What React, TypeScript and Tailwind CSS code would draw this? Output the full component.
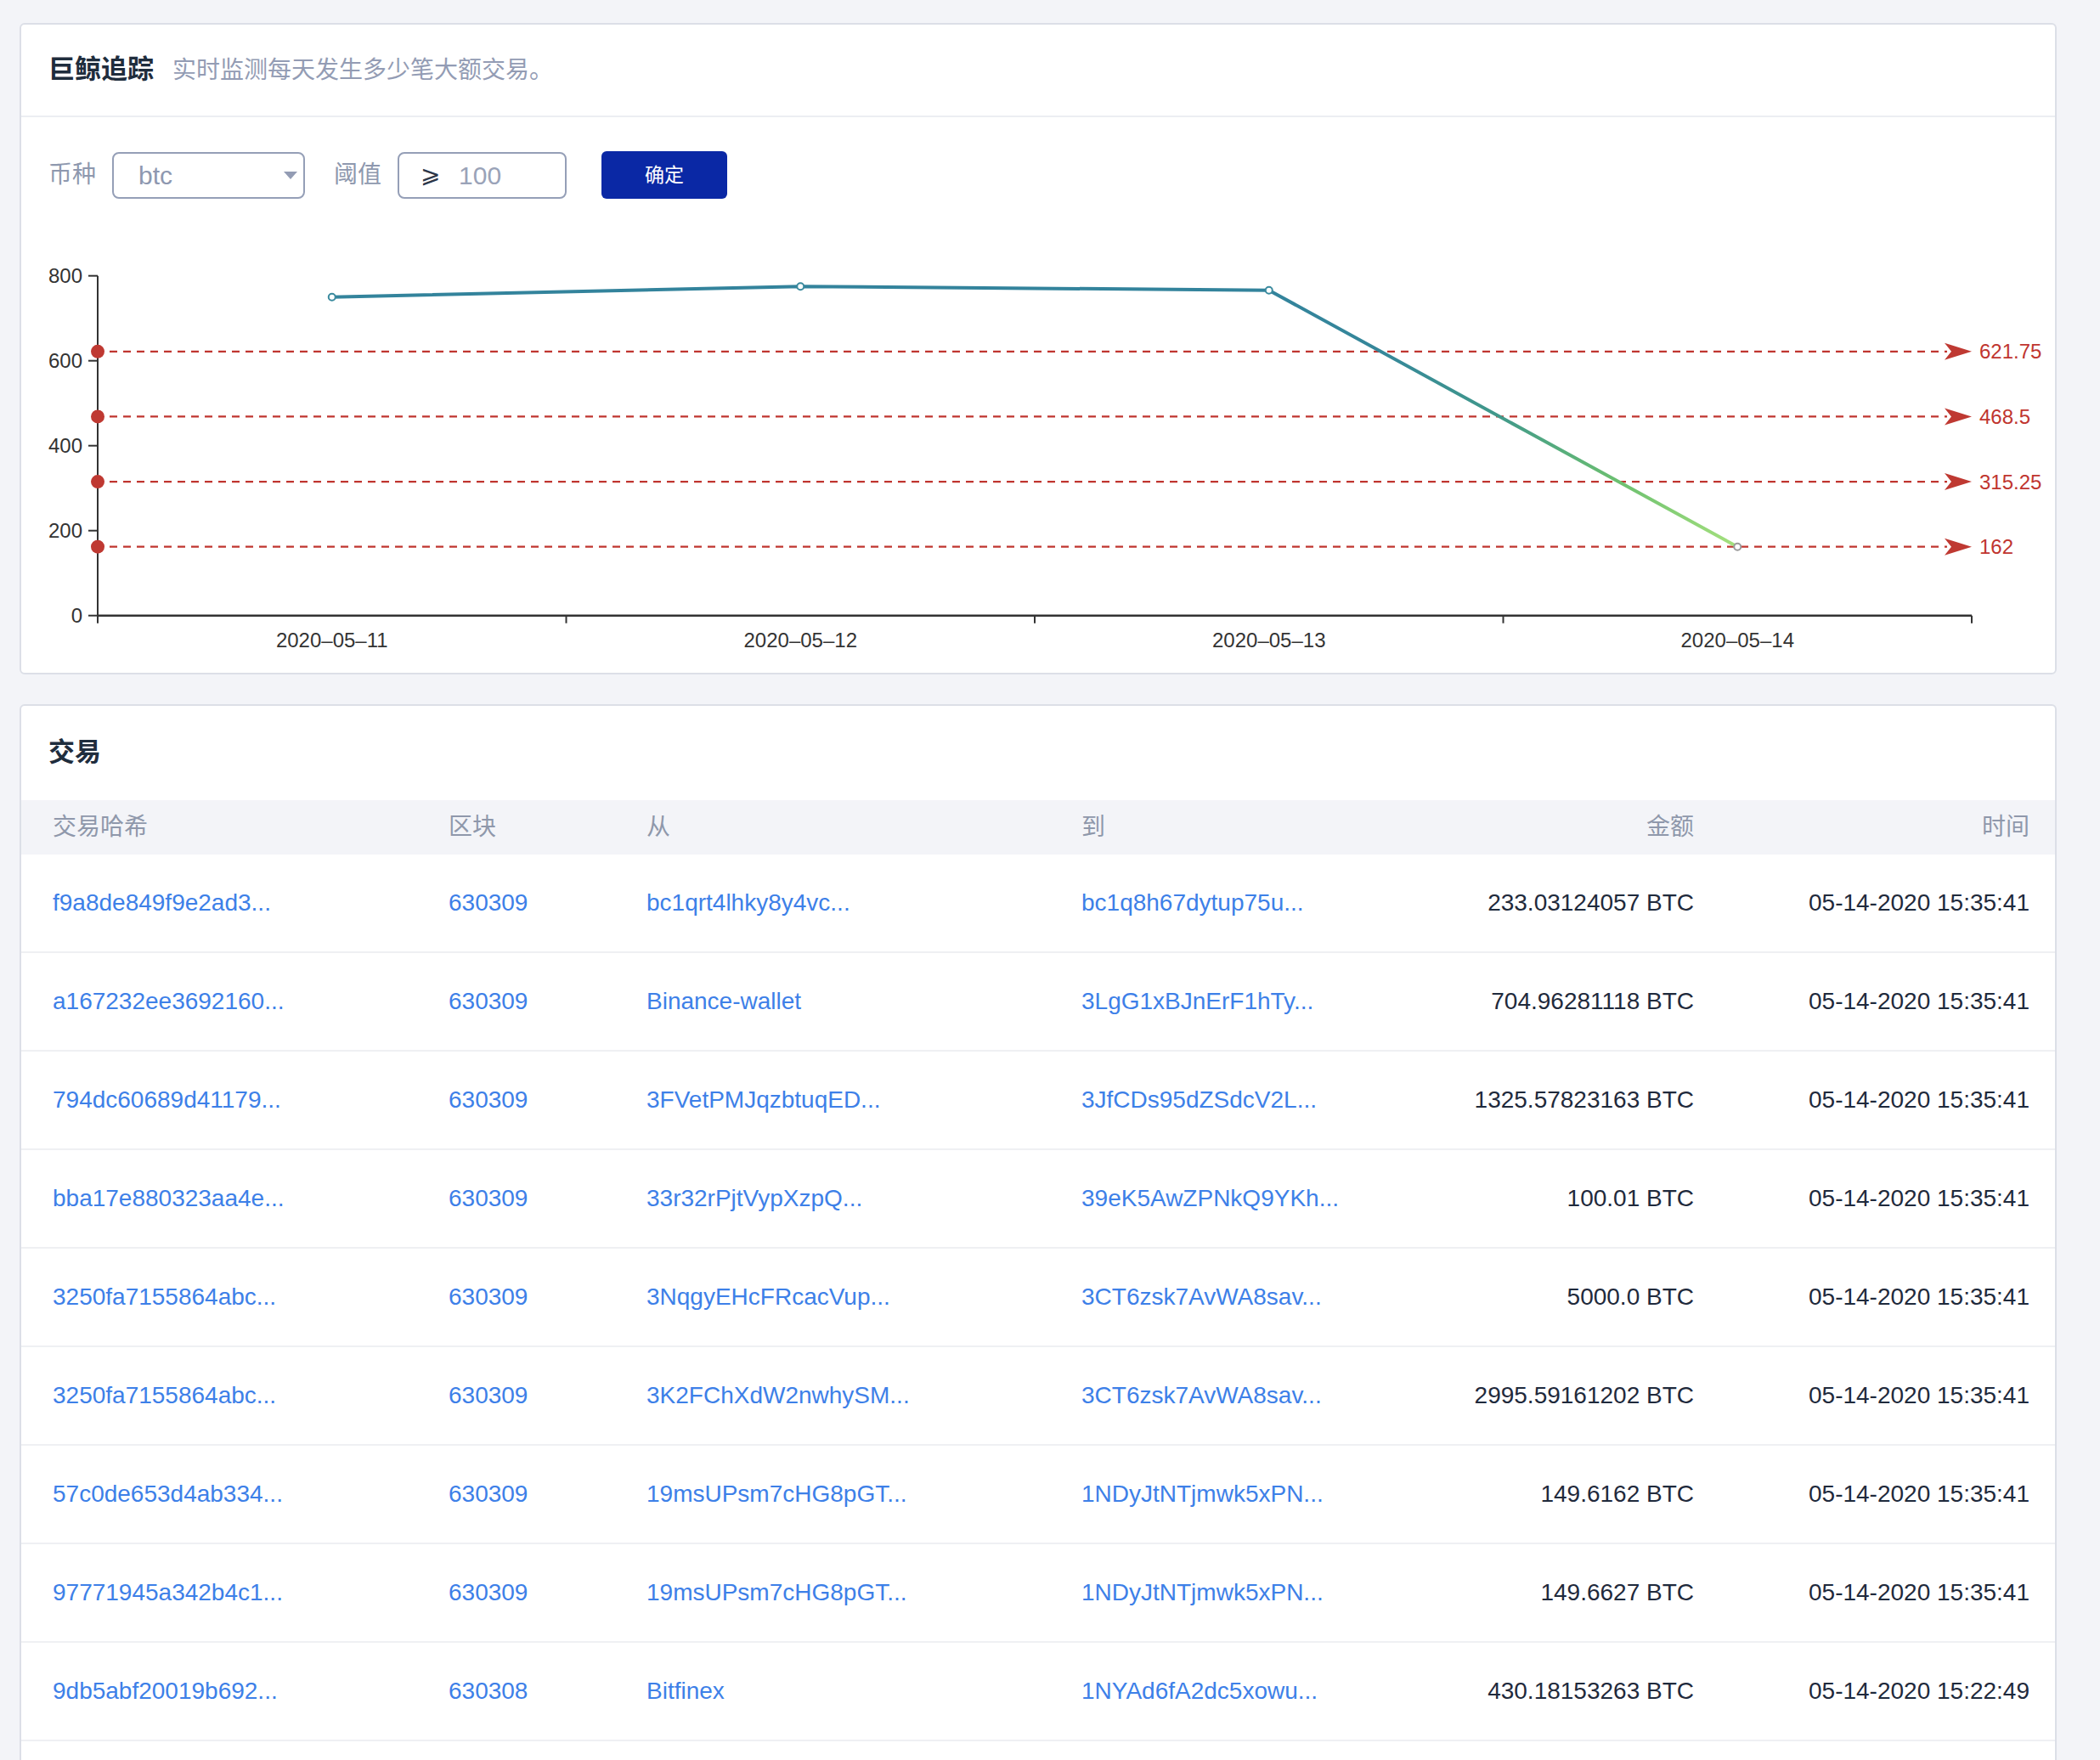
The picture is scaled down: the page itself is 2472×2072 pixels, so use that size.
import React from 'react';

const FONT = '"Liberation Sans", "Noto Sans CJK SC", sans-serif';

const rows = [
  { hash: 'f9a8de849f9e2ad3...', block: '630309', from: 'bc1qrt4lhky8y4vc...', to: 'bc1q8h67dytup75u...', amount: '233.03124057 BTC', time: '05-14-2020 15:35:41' },
  { hash: 'a167232ee3692160...', block: '630309', from: 'Binance-wallet', to: '3LgG1xBJnErF1hTy...', amount: '704.96281118 BTC', time: '05-14-2020 15:35:41' },
  { hash: '794dc60689d41179...', block: '630309', from: '3FVetPMJqzbtuqED...', to: '3JfCDs95dZSdcV2L...', amount: '1325.57823163 BTC', time: '05-14-2020 15:35:41' },
  { hash: 'bba17e880323aa4e...', block: '630309', from: '33r32rPjtVypXzpQ...', to: '39eK5AwZPNkQ9YKh...', amount: '100.01 BTC', time: '05-14-2020 15:35:41' },
  { hash: '3250fa7155864abc...', block: '630309', from: '3NqgyEHcFRcacVup...', to: '3CT6zsk7AvWA8sav...', amount: '5000.0 BTC', time: '05-14-2020 15:35:41' },
  { hash: '3250fa7155864abc...', block: '630309', from: '3K2FChXdW2nwhySM...', to: '3CT6zsk7AvWA8sav...', amount: '2995.59161202 BTC', time: '05-14-2020 15:35:41' },
  { hash: '57c0de653d4ab334...', block: '630309', from: '19msUPsm7cHG8pGT...', to: '1NDyJtNTjmwk5xPN...', amount: '149.6162 BTC', time: '05-14-2020 15:35:41' },
  { hash: '97771945a342b4c1...', block: '630309', from: '19msUPsm7cHG8pGT...', to: '1NDyJtNTjmwk5xPN...', amount: '149.6627 BTC', time: '05-14-2020 15:35:41' },
  { hash: '9db5abf20019b692...', block: '630308', from: 'Bitfinex', to: '1NYAd6fA2dc5xowu...', amount: '430.18153263 BTC', time: '05-14-2020 15:22:49' },
];

// chart geometry, in page pixels
const X0 = 115;
const X1 = 2321;
const Y0 = 726.7; // value 0
const yOf = (v: number) => Y0 - v * 0.5;
const days = ['2020–05–11', '2020–05–12', '2020–05–13', '2020–05–14'];
const values = [750, 775, 766, 162];
const step = (X1 - X0) / 4;
const xOf = (i: number) => X0 + step * i + step / 2;
const marks = [621.75, 468.5, 315.25, 162];

const Chart = () => {
  const pts = values.map((v, i) => `${xOf(i)},${yOf(v)}`).join(' ');
  return (
    <svg width={2394} height={558} viewBox="25 236 2394 558" className="block">
      <defs>
        <linearGradient id="lineGrad" gradientUnits="userSpaceOnUse" x1="0" y1="339" x2="0" y2="646">
          <stop offset="0" stopColor="#33839c" />
          <stop offset="0.25" stopColor="#35879a" />
          <stop offset="0.5" stopColor="#41998a" />
          <stop offset="0.75" stopColor="#6cc070" />
          <stop offset="1" stopColor="#a6e17e" />
        </linearGradient>
      </defs>

      {/* y axis */}
      <line x1={X0} y1={yOf(800)} x2={X0} y2={Y0 + 8} stroke="#333" strokeWidth={2} />
      {[0, 200, 400, 600, 800].map((v) => (
        <g key={v}>
          <line x1={X0 - 11} y1={yOf(v)} x2={X0} y2={yOf(v)} stroke="#333" strokeWidth={2} />
          <text x={97} y={yOf(v)} textAnchor="end" dominantBaseline="central" fontSize={24} fill="#333" fontFamily="Liberation Sans, sans-serif">
            {v}
          </text>
        </g>
      ))}

      {/* x axis */}
      <line x1={X0} y1={Y0} x2={X1} y2={Y0} stroke="#333" strokeWidth={2.5} />
      {[0, 1, 2, 3, 4].map((i) => (
        <line key={i} x1={X0 + step * i} y1={Y0} x2={X0 + step * i} y2={Y0 + 9} stroke="#333" strokeWidth={2} />
      ))}
      {days.map((d, i) => (
        <text key={d} x={xOf(i)} y={755} textAnchor="middle" dominantBaseline="central" fontSize={24} fill="#333" fontFamily="Liberation Sans, sans-serif">
          {d}
        </text>
      ))}

      {/* mark lines */}
      {marks.map((m) => {
        const y = yOf(m);
        return (
          <g key={m}>
            <line x1={X0 + 14} y1={y} x2={2292} y2={y} stroke="#c0352f" strokeWidth={2.2} strokeDasharray="9 7" />
            <circle cx={X0} cy={y} r={8} fill="#bf3932" />
            <polygon points={`${X1},${y} ${X1 - 32},${y - 10} ${X1 - 24},${y} ${X1 - 32},${y + 10}`} fill="#bf3932" />
            <text x={2330} y={y} dominantBaseline="central" fontSize={24} fill="#c0352f" fontFamily="Liberation Sans, sans-serif">
              {m}
            </text>
          </g>
        );
      })}

      {/* series */}
      <polyline points={pts} fill="none" stroke="url(#lineGrad)" strokeWidth={4} strokeLinejoin="round" />
      {values.map((v, i) => (
        <circle key={i} cx={xOf(i)} cy={yOf(v)} r={4} fill="#fff" stroke={i === 3 ? '#9a9a9a' : '#3a8a9e'} strokeWidth={2} />
      ))}
    </svg>
  );
};

export default function App() {
  return (
    <div className="h-[2072px] overflow-hidden bg-[#f3f4f8] pl-[23px] pt-[27px]" style={{ fontFamily: FONT }}>
      {/* whale tracking card */}
      <div className="w-[2398px] rounded-[6px] border-2 border-[#dcdfe7] bg-white">
        <div className="flex h-[109px] items-center border-b-2 border-[#eceef2] pl-[32px]">
          <h1 className="text-[31px] font-semibold text-[#1f2d3d]">巨鲸追踪</h1>
          <p className="ml-[22px] text-[28px] text-[#939cb4]">实时监测每天发生多少笔大额交易。</p>
        </div>

        <div className="flex items-center pl-[32px] pt-[40px]">
          <span className="text-[28px] text-[#8e98ae]">币种</span>
          <div className="ml-[19px] flex h-[55px] w-[227px] items-center justify-between rounded-[8px] border-2 border-[#959fb7] pl-[29px] pr-[7px]">
            <span className="text-[30px] text-[#8e98b0]">btc</span>
            <svg width="16" height="9" viewBox="0 0 16 9">
              <polygon points="0,0 16,0 8,9" fill="#939cb4" />
            </svg>
          </div>
          <span className="ml-[34px] text-[28px] text-[#8e98ae]">阈值</span>
          <div className="ml-[19px] flex h-[55px] w-[199px] items-center rounded-[8px] border-2 border-[#959fb7] pl-[25px]">
            <span className="w-[45px] text-[28px] text-[#2c3648]" style={{ fontFamily: '"DejaVu Sans", "Noto Sans CJK SC", sans-serif' }}>⩾</span>
            <span className="text-[30px] text-[#9aa3b8]">100</span>
          </div>
          <button className="ml-[41px] flex h-[56px] w-[148px] items-center justify-center rounded-[6px] bg-[#0a28a5] text-[23px] text-white">
            确定
          </button>
        </div>

        <Chart />
      </div>

      {/* transactions card */}
      <div className="mt-[35px] w-[2398px] rounded-[6px] border-2 border-[#dcdfe7] bg-white pb-[200px]">
        <div className="flex h-[111px] items-center pl-[32px]">
          <h2 className="text-[31px] font-semibold text-[#1f2d3d]">交易</h2>
        </div>

        <div className="grid h-[64px] grid-cols-[466px_233px_512px_350px_371px_395px] items-center bg-[#f3f4f8] pl-[37px] pr-[30px] text-[28px] text-[#8f98ab]">
          <span>交易哈希</span>
          <span>区块</span>
          <span>从</span>
          <span>到</span>
          <span className="text-right">金额</span>
          <span className="text-right">时间</span>
        </div>

        {rows.map((r, i) => (
          <div
            key={i}
            className="grid h-[116px] grid-cols-[466px_233px_512px_350px_371px_395px] items-center border-b-2 border-[#eff0f3] pl-[37px] pr-[30px] text-[28px]"
          >
            <span className="text-[#3d80e8]">{r.hash}</span>
            <span className="text-[#3d80e8]">{r.block}</span>
            <span className="text-[#3d80e8]">{r.from}</span>
            <span className="text-[#3d80e8]">{r.to}</span>
            <span className="text-right text-[#1f2a3c]">{r.amount}</span>
            <span className="text-right text-[#1f2a3c]">{r.time}</span>
          </div>
        ))}
      </div>
    </div>
  );
}
